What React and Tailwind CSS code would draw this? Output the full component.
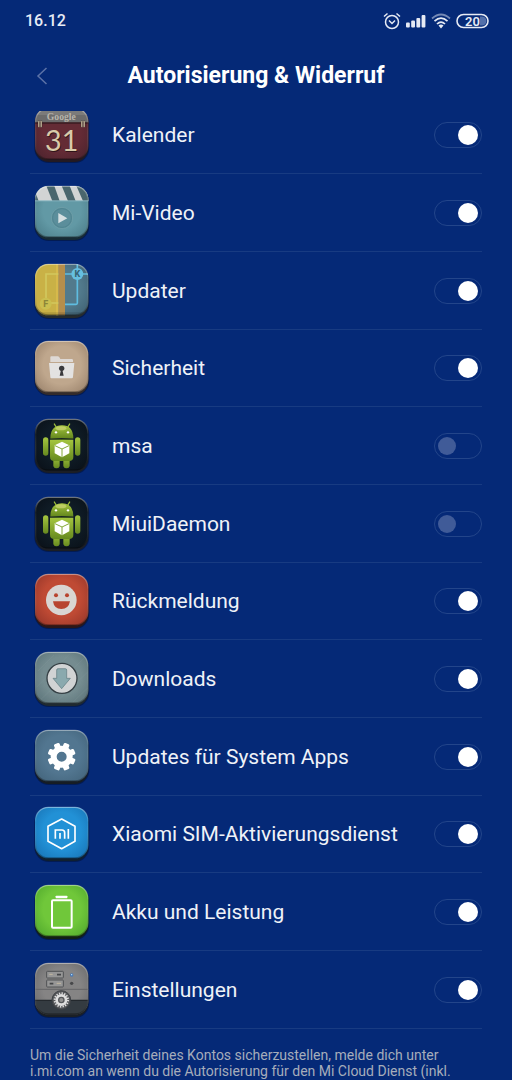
import { useState } from "react";

function Tile({ id, top, bottom, base = "#111820", children }) {
  return (
    <svg viewBox="0 0 168 168" className="size-14 shrink-0" aria-hidden="true">
      <defs>
        <radialGradient id={`${id}-fill`} cx="0.5" cy="0.45" r="0.75">
          <stop offset="0.45" stopColor={top} />
          <stop offset="1" stopColor={bottom} />
        </radialGradient>
        <clipPath id={`${id}-clip`}>
          <rect x="3" y="3" width="160" height="154" rx="40" />
        </clipPath>
        <linearGradient id={`${id}-rim`} x1="0" y1="0" x2="0" y2="1">
          <stop offset="0" stopColor="#fff" stopOpacity="0.4" />
          <stop offset="0.3" stopColor="#fff" stopOpacity="0.05" />
          <stop offset="1" stopColor="#000" stopOpacity="0.35" />
        </linearGradient>
      </defs>
      <rect x="1" y="6" width="165" height="162" rx="44" fill="#020c28" opacity="0.45" />
      <rect x="3" y="5" width="160" height="160" rx="42" fill={base} />
      <g clipPath={`url(#${id}-clip)`}>
        <rect width="168" height="168" fill={`url(#${id}-fill)`} />
        {children}
      </g>
      <rect x="5" y="4" width="156" height="152" rx="38" fill="none" stroke={`url(#${id}-rim)`} strokeWidth="4" />
    </svg>
  );
}

function CalendarIcon() {
  return (
    <Tile id="calendar" top="#642b35" bottom="#43202b" base="#231a22">
      <rect width="168" height="47" fill="#6c6b6b" />
      <rect width="168" height="24" fill="#7c7b7a" />
      <rect y="46" width="168" height="4" fill="#35191f" />
      <text x="82" y="38" textAnchor="middle" fontFamily="Liberation Serif, serif" fontWeight="700" fontSize="29" fill="#b9b5ac">Google</text>
      <g fill="#c9bd9f" stroke="#2b2020" strokeWidth="1">
        <rect x="12" y="41" width="5" height="20" rx="2" />
        <rect x="19" y="41" width="5" height="20" rx="2" />
        <rect x="141" y="41" width="5" height="20" rx="2" />
        <rect x="148" y="41" width="5" height="20" rx="2" />
      </g>
      <text x="85" y="135" textAnchor="middle" fontFamily="Lato, sans-serif" fontSize="86" fill="#301419">31</text>
      <text x="83" y="132" textAnchor="middle" fontFamily="Lato, sans-serif" fontSize="86" fill="#d9cba9">31</text>
    </Tile>
  );
}

function VideoIcon() {
  return (
    <Tile id="video" top="#6299a5" bottom="#447480" base="#172b35">
      <rect width="168" height="48" fill="#d2d4d4" />
      <g fill="#4a666d">
        <path d="M0 12 14 48H0Z" />
        <path d="M36 0H60L77 48H55Z" />
        <path d="M82 0H106L125 48H102Z" />
        <path d="M126 0H150L168 44V48H147Z" />
      </g>
      <rect y="46" width="168" height="3" fill="#86b5bf" />
      <circle cx="84" cy="99" r="32" fill="#548b97" stroke="#79a5ae" strokeWidth="2" />
      <circle cx="84" cy="99" r="28" fill="#5b8e9b" stroke="#477985" />
      <path d="M73 84V115L100 99.500Z" fill="#d5dfe1" />
    </Tile>
  );
}

function UpdaterIcon() {
  return (
    <Tile id="updater" top="#527a8c" bottom="#375768" base="#262b2c">
      <rect width="73" height="168" fill="#c9b146" />
      <rect x="73" width="20" height="168" fill="#b58e4c" />
      <rect x="66" width="7" height="168" fill="#d7b94b" />
      <path d="M73 33H36V120H73" fill="none" stroke="#d2c85e" strokeWidth="5" />
      <circle cx="35" cy="122" r="18" fill="#cbbf50" />
      <text x="35" y="132" textAnchor="middle" fontFamily="Roboto, sans-serif" fontWeight="800" fontSize="27" fill="#8b8638">F</text>
      <path d="M93 33H168M130 0V120Q130 124 126 124H93" fill="none" stroke="#5fbde0" strokeWidth="5" />
      <circle cx="130" cy="33" r="18" fill="#66bfe0" />
      <text x="130" y="43" textAnchor="middle" fontFamily="Roboto, sans-serif" fontWeight="800" fontSize="27" fill="#376476">K</text>
      <path d="M0 148H168V168H0Z" fill="#000" opacity="0.13" />
    </Tile>
  );
}

function SecurityIcon() {
  return (
    <Tile id="security" top="#bfa78d" bottom="#8d755f" base="#342b2a">
      <path d="M49 66V52Q49 49 52 49H71Q74 49 76 52L79 57H113Q117 57 117 61V66Z" fill="#ded9d5" />
      <path d="M45 69H121L117 111Q117 115 113 115H52Q49 115 49 111Z" fill="#e3e2e1" />
      <circle cx="83" cy="85" r="8" fill="#39393c" />
      <path d="M80 87H86V94L89 107H77L80 94Z" fill="#39393c" />
    </Tile>
  );
}

function AndroidIcon({ id }) {
  return (
    <Tile id={id} top="#0f1b25" bottom="#070c13" base="#1b1e25">
      <defs>
        <linearGradient id={`${id}-green`} x1="0" y1="0" x2="0" y2="1">
          <stop offset="0" stopColor="#a5c63f" />
          <stop offset="1" stopColor="#66891f" />
        </linearGradient>
      </defs>
      <g fill={`url(#${id}-green)`}>
        <rect x="58" y="110" width="19" height="41" rx="9" />
        <rect x="88" y="110" width="19" height="41" rx="9" />
        <rect x="27" y="58" width="16" height="55" rx="8" />
        <rect x="123" y="58" width="16" height="55" rx="8" />
        <path d="M48 65H118V116Q118 129 105 129H61Q48 129 48 116Z" />
        <path d="M49 60Q50 22 84 22Q117 22 118 60Z" />
      </g>
      <path d="M61 18 69 31M107 18 99 31" stroke="#9bbb3c" strokeWidth="4" strokeLinecap="round" />
      <path d="M49 62Q83 66 118 62" fill="none" stroke="#4c671b" strokeWidth="3" />
      <ellipse cx="81" cy="31" rx="16" ry="6" fill="#d2d87b" opacity="0.65" />
      <circle cx="66" cy="43" r="3.500" fill="#fff" />
      <circle cx="102" cy="43" r="3.500" fill="#fff" />
      <path d="M84 71 106 82V106L84 118 62 106V82Z" fill="#fff" />
      <path d="M63 83 84 93 105 83M84 93V118" fill="none" stroke="#84a938" strokeWidth="3" />
    </Tile>
  );
}

function FeedbackIcon() {
  return (
    <Tile id="feedback" top="#bf4a34" bottom="#872f26" base="#2c1718">
      <circle cx="82" cy="81" r="46" fill="#d9d5d2" />
      <circle cx="66" cy="67" r="6" fill="#b8432e" />
      <circle cx="99" cy="67" r="6" fill="#b8432e" />
      <path d="M57 85H108Q104 108 82 108T57 85Z" fill="#b8432e" />
    </Tile>
  );
}

function DownloadsIcon() {
  return (
    <Tile id="downloads" top="#768d91" bottom="#526a70" base="#202a30">
      <path d="M12 60 60 12M8 108 108 8M20 146 152 20M70 150 160 64M116 154 162 110" stroke="#94a7aa" strokeWidth="1" opacity="0.45" />
      <circle cx="84" cy="82" r="45" fill="#d1d3d4" stroke="#353f44" strokeWidth="4" />
      <path d="M68 57Q68 53 72 53H94Q98 53 98 57V82H109L83 113 57 82H68Z" fill="#8aa9ae" stroke="#5d797f" strokeWidth="2" />
    </Tile>
  );
}

function SystemIcon() {
  return (
    <Tile id="system" top="#527690" bottom="#3d5d73" base="#161d24">
      <g fill="#fff" transform="translate(83 83)">
        {[22.5, 67.5, 112.5, 157.5, 202.5, 247.5, 292.5, 337.5].map((angle) => (
          <rect key={angle} x="-9" y="-42" width="18" height="20" rx="4" transform={`rotate(${angle})`} />
        ))}
      </g>
      <circle cx="83" cy="83" r="24" fill="none" stroke="#fff" strokeWidth="18" />
    </Tile>
  );
}

function MiIcon() {
  return (
    <Tile id="mi" top="#2291d6" bottom="#1469aa" base="#10202f">
      <path d="M83 39 123 61V106L83 128 42 106V61Z" fill="none" stroke="#fff" strokeWidth="5" strokeLinejoin="round" />
      <path d="M64 98V72H84Q92 72 92 80V98M78 81V98M103 69V98" fill="none" stroke="#fff" strokeWidth="5" />
    </Tile>
  );
}

function BatteryAppIcon() {
  return (
    <Tile id="battery" top="#70c73a" bottom="#459e28" base="#122115">
      <rect x="65" y="35" width="35" height="8" rx="2" fill="#fff" />
      <rect x="54" y="49" width="59" height="82" rx="3" fill="none" stroke="#fff" strokeWidth="6" />
    </Tile>
  );
}

function SettingsIcon() {
  return (
    <Tile id="settings" top="#858484" bottom="#5d5d5f" base="#1b2025">
      <path d="M4 82H164" stroke="#666668" strokeWidth="3" />
      <rect y="116" width="168" height="52" fill="#343b41" />
      <path d="M0 115H168" stroke="#23282d" strokeWidth="4" />
      <g fill="#969696" stroke="#505255" strokeWidth="3">
        <rect x="38" y="28" width="50" height="20" rx="2" />
        <rect x="38" y="54" width="50" height="21" rx="2" />
      </g>
      <path d="M69 38H81M47 65H58" stroke="#444649" strokeWidth="5" />
      <path d="M46 37H56M68 64H81" stroke="#c2b7a0" strokeWidth="3" />
      <circle cx="113" cy="39" r="5" fill="#4577b6" />
      <circle cx="113" cy="38" r="2" fill="#c8edff" />
      <circle cx="113" cy="64" r="5" fill="#47484a" />
      <circle cx="82" cy="114" r="28" fill="#55575a" stroke="#3d4044" strokeWidth="3" />
      <circle cx="82" cy="114" r="20" fill="none" stroke="#dedede" strokeWidth="6" strokeDasharray="4 3.854" />
      <circle cx="82" cy="114" r="14" fill="none" stroke="#dedede" strokeWidth="8" />
      <circle cx="82" cy="114" r="6" fill="#919191" />
    </Tile>
  );
}

function StatusBar() {
  return (
    <div className="flex h-10 items-center justify-between pt-0.5 pr-[22px] pl-[25px]">
      <time className="text-base leading-5 font-medium text-[#e8ecf5]">16.12</time>
      <div className="flex items-center gap-[5px] text-[#e6eaf4]">
        <svg viewBox="0 0 18 18" className="size-[18px]" fill="none" stroke="currentColor" strokeWidth="1.500" role="img" aria-label="Wecker">
          <circle cx="9" cy="10" r="6.500" />
          <path d="m6 8.500 3 3 3-3M1 4.500 4.500 1.500M17 4.500 13.500 1.500" />
        </svg>
        <svg viewBox="0 0 20 14" className="h-3.5 w-5" fill="currentColor" role="img" aria-label="Mobilfunk">
          <rect x="0" y="8.500" width="3.800" height="5" rx="1" />
          <rect x="5.200" y="6.500" width="3.800" height="7" rx="1" />
          <rect x="10.400" y="4" width="3.800" height="9.500" rx="1" />
          <rect x="15.600" y="1" width="3.800" height="12.500" rx="1" />
        </svg>
        <svg viewBox="0 0 20 16" className="h-4 w-5" fill="none" stroke="currentColor" strokeWidth="1.700" role="img" aria-label="WLAN">
          <path d="M1 5.500Q10-2.500 19 5.500" opacity="0.5" />
          <path d="M3.500 8.200Q10 2 16.500 8.200M6 11Q10 7 14 11" />
          <path d="M7.500 12.500Q10 10.500 12.500 12.500L10 15.500Z" fill="currentColor" stroke="none" />
        </svg>
        <svg viewBox="0 0 34 16" className="h-4 w-[34px]" role="img" aria-label="Akku 20 Prozent">
          <path d="M24 3.500H26A4.500 4.500 0 0 1 26 12.500H24Z" fill="#5370aa" />
          <rect x="1" y="1.500" width="31" height="13" rx="6.500" fill="none" stroke="currentColor" strokeWidth="1.600" />
          <text x="16.500" y="12.700" textAnchor="middle" fontFamily="Roboto, sans-serif" fontWeight="600" fontSize="13" fill="currentColor">20</text>
        </svg>
      </div>
    </div>
  );
}

const services = [
  { id: "kalender", name: "Kalender", icon: <CalendarIcon />, on: true },
  { id: "mi-video", name: "Mi-Video", icon: <VideoIcon />, on: true },
  { id: "updater-service", name: "Updater", icon: <UpdaterIcon />, on: true },
  { id: "sicherheit", name: "Sicherheit", icon: <SecurityIcon />, on: true },
  { id: "msa", name: "msa", icon: <AndroidIcon id="android-msa" />, on: false },
  { id: "miuidaemon", name: "MiuiDaemon", icon: <AndroidIcon id="android-miui" />, on: false },
  { id: "rueckmeldung", name: "Rückmeldung", icon: <FeedbackIcon />, on: true },
  { id: "download-service", name: "Downloads", icon: <DownloadsIcon />, on: true },
  { id: "system-apps", name: "Updates für System Apps", icon: <SystemIcon />, on: true },
  { id: "sim", name: "Xiaomi SIM-Aktivierungsdienst", icon: <MiIcon />, on: true },
  { id: "akku", name: "Akku und Leistung", icon: <BatteryAppIcon />, on: true },
  { id: "einstellungen", name: "Einstellungen", icon: <SettingsIcon />, on: true },
];

function ServiceRow({ service }) {
  const [on, setOn] = useState(service.on);
  return (
    <li className="flex h-[78px] items-center border-b border-[#183b82] pl-1 nth-[3n+1]:h-[77px]">
      {service.icon}
      <label htmlFor={service.id} className="min-w-0 flex-1 pl-[22px] text-[21px] leading-7 text-[#eff2f8]">
        {service.name}
      </label>
      <input
        id={service.id}
        type="checkbox"
        role="switch"
        checked={on}
        onChange={(event) => setOn(event.target.checked)}
        className="flex h-[26px] w-12 shrink-0 appearance-none items-center rounded-full border border-[#23458a] px-[3px] before:size-[18px] before:rounded-full before:bg-[#405b98] before:content-[''] checked:justify-end checked:before:size-5 checked:before:bg-white"
      />
    </li>
  );
}

export default function App() {
  return (
    <div className="min-h-screen bg-[#052977] font-['Roboto',sans-serif] text-white">
      <StatusBar />
      <header className="grid h-[71px] grid-cols-[1fr_auto_1fr] items-center px-[30px]">
        <button type="button" aria-label="Zurück" className="flex size-6 items-center justify-center text-[#5c72a7]">
          <svg viewBox="0 0 12 18" className="h-[18px] w-3" fill="none" stroke="currentColor" strokeWidth="1.500" aria-hidden="true">
            <path d="M10.500 1 2 9l8.500 8" />
          </svg>
        </button>
        <h1 className="text-[23px] leading-7 font-bold">Autorisierung &amp; Widerruf</h1>
      </header>
      <main className="overflow-hidden px-[30px]">
        <ul className="-mt-3.5">
          {services.map((service) => (
            <ServiceRow key={service.id} service={service} />
          ))}
        </ul>
        <p className="pt-[18px] text-sm leading-4 text-[#a6adbb]">
          Um die Sicherheit deines Kontos sicherzustellen, melde dich unter i.mi.com an wenn du die Autorisierung für den Mi Cloud Dienst (inkl.
        </p>
      </main>
    </div>
  );
}
